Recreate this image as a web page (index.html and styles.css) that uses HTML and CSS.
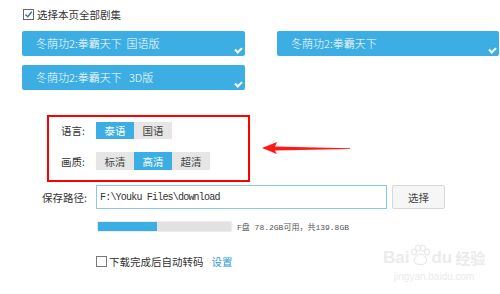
FILE: index.html
```html
<!DOCTYPE html>
<html lang="zh-CN">
<head>
    <meta charset="UTF-8">
    <title>下载设置</title>
    <link rel="stylesheet" href="styles.css">
</head>
<body>

    <div class="panel">
        <label class="select-all">
            <span class="tick-box checked">
                <svg width="9" height="9" viewBox="0 0 9 9"><path d="M1.5 4.5 L3.8 6.8 L7.8 1.8" fill="none" stroke="#3a6ea5" stroke-width="1.4"/></svg>
            </span>
            选择本页全部剧集
        </label>

        <div class="episodes">
            <div class="episode">冬荫功2:拳霸天下&nbsp; 国语版<span class="ep-check"></span></div>
            <div class="episode">冬荫功2:拳霸天下<span class="ep-check"></span></div>
            <div class="episode">冬荫功2:拳霸天下&nbsp;&nbsp; 3D版<span class="ep-check"></span></div>
        </div>

        <div class="options">
            <div class="option-box">
                <div class="option-row">
                    <span class="option-label">语言:</span>
                    <span class="opt active">泰语</span>
                    <span class="opt">国语</span>
                </div>
                <div class="option-row">
                    <span class="option-label">画质:</span>
                    <span class="opt">标清</span>
                    <span class="opt active">高清</span>
                    <span class="opt">超清</span>
                </div>
            </div>
            <svg class="arrow" width="90" height="14" viewBox="0 0 90 14">
                <path d="M0 6 L15 0 L13 4.5 L88 6.3 L88 6.9 L13 8.5 L15 12 Z" fill="#ff1a1a"/>
            </svg>
        </div>

        <div class="field-row path-row">
            <span class="field-label">保存路径:</span>
            <div class="path-input">F:\Youku Files\download</div>
            <button class="pick-btn">选择</button>
        </div>

        <div class="field-row disk-row">
            <span class="field-label"></span>
            <div class="disk-bar"><div class="disk-used" style="width: 44%"></div></div>
            <span class="disk-text">F盘 78.2GB可用，共139.8GB</span>
        </div>

        <div class="field-row convert-row">
            <span class="field-label"></span>
            <label class="convert">
                <span class="tick-box"></span>
                下载完成后自动转码
            </label>
            <a class="settings-link">设置</a>
        </div>

        <div class="watermark">
            <div class="wm-logo">
                <span>Bai</span>
                <svg class="paw" width="22" height="22" viewBox="0 0 22 22">
                    <g fill="#fff" stroke="#e4e4e4" stroke-width="1">
                        <ellipse cx="5" cy="8" rx="2.5" ry="3"/>
                        <ellipse cx="9" cy="4" rx="2.5" ry="3"/>
                        <ellipse cx="14" cy="4" rx="2.5" ry="3"/>
                        <ellipse cx="18" cy="8" rx="2.5" ry="3"/>
                        <path d="M11.5 10 C7 10 4 16 6 19 C8 21 15 21 17 19 C19 16 16 10 11.5 10 Z"/>
                    </g>
                </svg>
                <span>du</span>
                <span class="wm-cn">经验</span>
            </div>
            <div class="wm-url">jingyan.baidu.com</div>
        </div>
    </div>

</body>
</html>
```

FILE: styles.css
```css
body {
    margin: 0;
    background-color: #ffffff;
    font-family: "Noto Sans CJK SC", "Noto Sans", sans-serif;
    font-size: 10.5px;
    color: #333333;
}
.panel {
    position: relative;
    width: 500px;
    height: 294px;
    padding: 7px 0 0 22px;
    box-sizing: border-box;
}
.select-all {
    display: flex;
    align-items: center;
    gap: 3px;
    height: 15px;
    padding-left: 1px;
}
.tick-box {
    display: inline-flex;
    align-items: center;
    justify-content: center;
    width: 9px;
    height: 9px;
    border: 1px solid #777777;
    background-color: #ffffff;
    box-sizing: content-box;
}
.tick-box.checked {
    border-color: #666666;
}
.episodes {
    display: grid;
    grid-template-columns: 223px 222px;
    column-gap: 32px;
    row-gap: 9px;
    margin-top: 9px;
}
.episode {
    position: relative;
    height: 25px;
    line-height: 24px;
    padding-left: 14px;
    background-color: #3daee3;
    border-radius: 2px;
    color: #ffffff;
    font-size: 11px;
    font-weight: 300;
}
.ep-check {
    position: absolute;
    right: 3px;
    bottom: 4px;
    width: 5px;
    height: 3px;
    border-left: 2px solid #ffffff;
    border-bottom: 2px solid #ffffff;
    transform: rotate(-45deg);
}
.options {
    position: relative;
    margin-top: 25px;
    padding-left: 25px;
}
.option-box {
    width: 187px;
    height: 58px;
    border: 2px solid #ff0000;
    padding: 5px 0 0 12px;
    box-sizing: content-box;
    display: flex;
    flex-direction: column;
    gap: 13px;
}
.option-row {
    display: flex;
    align-items: center;
    height: 17px;
}
.option-row + .option-row {
    height: 18px;
}
.option-label {
    width: 35px;
}
.opt {
    display: flex;
    align-items: center;
    justify-content: center;
    width: 38px;
    height: 100%;
    background-color: #e6e6e6;
    color: #444444;
}
.opt.active {
    background-color: #3daee3;
    color: #ffffff;
}
.arrow {
    position: absolute;
    left: 240px;
    top: 27px;
}
.field-row {
    display: flex;
    align-items: center;
}
.field-label {
    width: 65px;
    padding-right: 9px;
    text-align: right;
    flex-shrink: 0;
}
.path-row {
    margin-top: 3px;
    height: 24px;
}
.path-input {
    width: 291px;
    height: 24px;
    line-height: 23px;
    border: 1px solid #86c9ec;
    box-sizing: border-box;
    padding-left: 3px;
    font-family: "Liberation Mono", monospace;
    font-size: 10px;
    letter-spacing: -0.8px;
    color: #333333;
}
.pick-btn {
    margin-left: 5px;
    width: 53px;
    height: 24px;
    border: 1px solid #d8d8d8;
    border-radius: 2px;
    background-color: #f6f6f6;
    font-family: "Noto Sans CJK SC", sans-serif;
    font-size: 10.5px;
    color: #444444;
}
.disk-row {
    margin-top: 12px;
    height: 11px;
}
.disk-bar {
    margin-left: 1px;
    width: 135px;
    height: 11px;
    background-color: #e2e2e2;
    border: 1px solid #ececec;
    box-sizing: border-box;
}
.disk-used {
    height: 100%;
    background-color: #3daee3;
}
.disk-text {
    margin-left: 5px;
    font-family: "Liberation Mono", "Noto Sans CJK SC", monospace;
    font-size: 8px;
    color: #555555;
}
.convert-row {
    margin-top: 22px;
}
.convert {
    display: flex;
    align-items: center;
    gap: 2px;
}
.settings-link {
    margin-left: 8px;
    color: #2a9ad8;
}
.watermark {
    position: absolute;
    left: 383px;
    top: 238px;
    color: #ebebeb;
    text-align: center;
}
.wm-logo {
    display: flex;
    align-items: flex-end;
    font-family: "Liberation Sans", sans-serif;
    font-size: 17px;
    font-weight: bold;
    line-height: 20px;
    height: 30px;
}
.paw {
    margin-bottom: 2px;
}
.wm-cn {
    margin-left: 3px;
    font-family: "Noto Sans CJK SC", sans-serif;
    font-size: 15px;
}
.wm-url {
    font-family: "Liberation Sans", sans-serif;
    font-size: 10px;
    margin-top: 3px;
}
```
